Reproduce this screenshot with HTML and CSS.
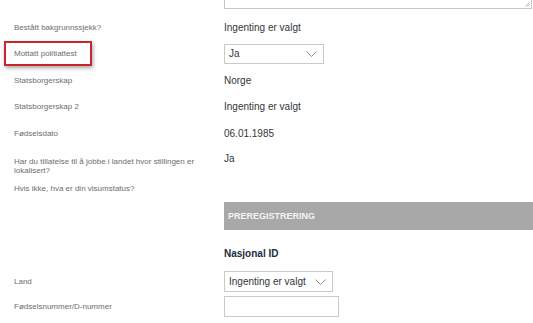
FILE: index.html
```html
<!DOCTYPE html>
<html lang="no">
<head>
<meta charset="utf-8">
<title>Skjema</title>
<link rel="stylesheet" href="styles.css">
</head>
<body>
<div class="form">
  <div class="row r-ta">
    <div class="label"></div>
    <div class="value">
      <div class="textarea">
        <svg class="grip" width="5" height="5" viewBox="0 0 5 5"><path d="M4.5 0.5 L0.5 4.5 M4.5 2.5 L2.5 4.5" stroke="#9a9a9a" stroke-width="0.8" fill="none"/></svg>
      </div>
    </div>
  </div>
  <div class="row r-best">
    <div class="label">Bestått bakgrunnssjekk?</div>
    <div class="value">Ingenting er valgt</div>
  </div>
  <div class="row r-mott">
    <div class="label"><span class="annot"></span>Mottatt politiattest</div>
    <div class="value">
      <div class="select select-ja">
        <span>Ja</span>
        <svg class="chev" width="11" height="6" viewBox="0 0 11 6"><polyline points="0.5,0.5 5.5,5.5 10.5,0.5" fill="none" stroke="#8a8a8a" stroke-width="1"/></svg>
      </div>
    </div>
  </div>
  <div class="row r-stat">
    <div class="label">Statsborgerskap</div>
    <div class="value">Norge</div>
  </div>
  <div class="row r-stat2">
    <div class="label">Statsborgerskap 2</div>
    <div class="value">Ingenting er valgt</div>
  </div>
  <div class="row r-fod">
    <div class="label">Fødselsdato</div>
    <div class="value">06.01.1985</div>
  </div>
  <div class="row r-har">
    <div class="label">Har du tillatelse til å jobbe i landet hvor stillingen er lokalisert?</div>
    <div class="value">Ja</div>
  </div>
  <div class="row r-hvis">
    <div class="label">Hvis ikke, hva er din visumstatus?</div>
    <div class="value"></div>
  </div>
  <div class="row r-bar">
    <div class="label"></div>
    <div class="value"><div class="bar">PREREGISTRERING</div></div>
  </div>
  <div class="row r-nid">
    <div class="label"></div>
    <div class="value"><span class="subhead">Nasjonal ID</span></div>
  </div>
  <div class="row r-land">
    <div class="label">Land</div>
    <div class="value">
      <div class="select select-land">
        <span>Ingenting er valgt</span>
        <svg class="chev" width="11" height="6" viewBox="0 0 11 6"><polyline points="0.5,0.5 5.5,5.5 10.5,0.5" fill="none" stroke="#8a8a8a" stroke-width="1"/></svg>
      </div>
    </div>
  </div>
  <div class="row r-fnr">
    <div class="label">Fødselsnummer/D-nummer</div>
    <div class="value"><div class="input"></div></div>
  </div>
</div>
</body>
</html>
```

FILE: styles.css
```css
html, body {
  margin: 0;
  padding: 0;
  background: #ffffff;
}
body {
  font-family: "Liberation Sans", Arial, sans-serif;
  overflow: hidden;
}
.form {
  display: flex;
  flex-direction: column;
  width: 533px;
}
.row {
  display: flex;
  align-items: center;
}
.label {
  flex: none;
  width: 190px;
  padding-left: 14px;
  padding-right: 20px;
  font-size: 8px;
  line-height: 10px;
  color: #6a6d70;
  position: relative;
}
.value {
  flex: 1;
  font-size: 10px;
  line-height: 12px;
  color: #32363a;
}

.r-ta { height: 9px; align-items: flex-start; }
.textarea {
  box-sizing: border-box;
  width: 308px;
  height: 9px;
  border: 1px solid #c6c6c6;
  border-top: none;
  position: relative;
}
.grip {
  position: absolute;
  right: 1px;
  bottom: 1px;
}

.r-best { margin-top: 6px; height: 26px; }
.r-mott { height: 26px; }
.r-stat { height: 27px; }
.r-stat2 { height: 26px; }
.r-fod { height: 27px; }
.r-har { height: 33px; align-items: flex-start; }
.r-har .label { padding-top: 10px; line-height: 9px; }
.r-har .value { padding-top: 6px; }
.r-hvis { height: 18px; }
.r-bar { margin-top: 4px; height: 28px; align-items: stretch; }
.r-nid { margin-top: 10px; height: 28px; }
.r-land { height: 27px; }
.r-fnr { height: 23px; }

.annot {
  position: absolute;
  left: 4px;
  top: -8px;
  width: 88px;
  height: 25px;
  box-sizing: border-box;
  border: 2px solid #c9252c;
  box-shadow: 1px 2px 4px rgba(0, 0, 0, 0.35);
}

.select {
  box-sizing: border-box;
  display: flex;
  align-items: center;
  justify-content: space-between;
  border: 1px solid #c9c9c9;
  background: #fff;
  padding: 0 6px 0 4px;
  font-size: 10px;
  color: #32363a;
}
.select-ja { width: 100px; height: 20px; }
.select-land { width: 109px; height: 21px; }
.chev { flex: none; }

.input {
  box-sizing: border-box;
  width: 115px;
  height: 21px;
  border: 1px solid #c9c9c9;
  background: #fff;
}

.bar {
  height: 28px;
  box-sizing: border-box;
  background: #a8a8a8;
  color: #f4f4f4;
  font-weight: bold;
  font-size: 9px;
  display: flex;
  align-items: center;
  padding-left: 4px;
}

.subhead {
  font-weight: bold;
  font-size: 10px;
  color: #1d2b3f;
}
```
